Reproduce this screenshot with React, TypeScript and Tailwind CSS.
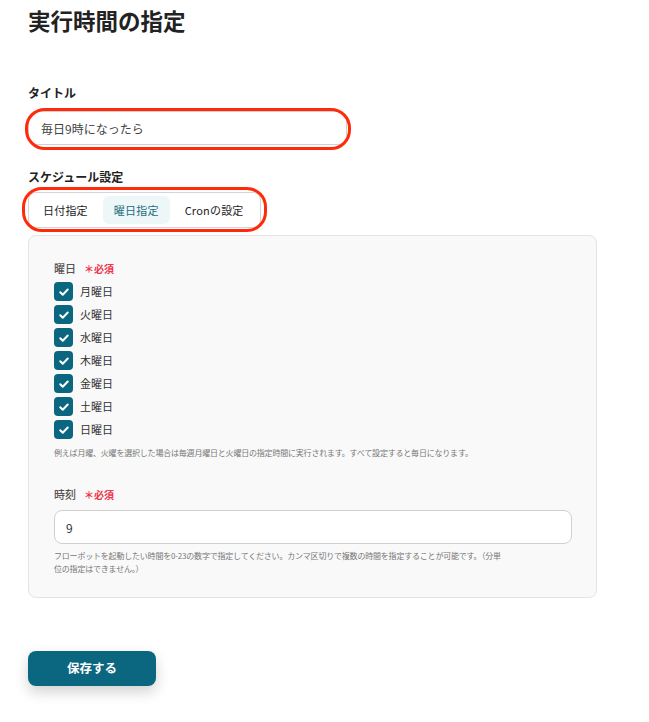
import React, { useState } from 'react';

// ── Fonts / colours ─────────────────────────────────────────────────────────
const FONT = '"Noto Sans CJK JP", "Noto Sans", "Liberation Sans", sans-serif';
const DAYS = ['月曜日', '火曜日', '水曜日', '木曜日', '金曜日', '土曜日', '日曜日'];
const TABS = ['日付指定', '曜日指定', 'Cronの設定'];

// ── Required badge ──────────────────────────────────────────────────────────
const Required = () => (
  <span className="ml-2 text-[10px] font-bold text-[#f0344e]">＊必須</span>
);

// ── Teal checkbox ───────────────────────────────────────────────────────────
const Check = ({ checked, onClick }: { checked: boolean; onClick: () => void }) => (
  <button
    onClick={onClick}
    className={`w-[19px] h-[19px] rounded-[4px] flex items-center justify-center shrink-0 ${
      checked ? 'bg-[#0b6680]' : 'bg-white border border-gray-300'
    }`}
  >
    {checked && (
      <svg width="12" height="12" viewBox="0 0 24 24" fill="none" stroke="white" strokeWidth="4" strokeLinecap="round" strokeLinejoin="round">
        <path d="M4.5 12.5l5 5L19.5 7" />
      </svg>
    )}
  </button>
);

// ── Red annotation ring (drawn over the field) ──────────────────────────────
const Ring = ({ className }: { className: string }) => (
  <div className={`pointer-events-none absolute border-[3px] border-[#ff2a0a] ${className}`} />
);

export default function App() {
  const [tab, setTab] = useState(1);
  const [days, setDays] = useState<boolean[]>(DAYS.map(() => true));

  return (
    <div className="min-h-screen bg-white pl-[28px] text-[#333]" style={{ fontFamily: FONT }}>
      <h1 className="text-[22.5px] leading-[40px] font-bold text-[#222]">実行時間の指定</h1>

      {/* ── Title ─────────────────────────────────────────────────── */}
      <div className="mt-[45px] text-[12px] leading-[16px] font-bold text-[#222]">タイトル</div>
      <div className="relative mt-[10px] w-[319px]">
        <input
          defaultValue="毎日9時になったら"
          className="w-full h-[34px] rounded-lg border border-[#d0d0d0] bg-white px-[12px] text-[12px] text-[#444] outline-none"
        />
        <Ring className="-left-[3px] -right-[4px] -top-[3px] -bottom-[5px] rounded-[20px]" />
      </div>

      {/* ── Schedule tabs ─────────────────────────────────────────── */}
      <div className="mt-[24px] text-[12px] leading-[16px] font-bold text-[#222]">スケジュール設定</div>
      <div className="relative mt-[7px] w-fit">
        <div className="flex gap-1 p-[3px] pr-[5px] rounded-lg border border-[#d4d4d4] bg-white">
          {TABS.map((t, i) => (
            <button
              key={t}
              onClick={() => setTab(i)}
              className={`h-[28px] px-[11px] rounded-md text-[11px] tracking-[0.2px] ${
                tab === i ? 'bg-[#eef7f8] text-[#1d6b7e]' : 'text-[#222]'
              }`}
            >
              {t}
            </button>
          ))}
        </div>
        <Ring className="-left-[6px] -right-[6px] -top-[5px] -bottom-[4px] rounded-[20px]" />
      </div>

      {/* ── Panel ─────────────────────────────────────────────────── */}
      <div className="mt-[7px] w-[569px] rounded-lg border border-[#e4e4e4] bg-[#f9f9f9] pl-[25px] pr-[24px] pt-[24px] pb-[22px]">
        <div className="text-[11px] leading-[16px] font-medium text-[#555]">
          曜日<Required />
        </div>
        <div className="mt-[5px] flex flex-col gap-[4px]">
          {DAYS.map((d, i) => (
            <label key={d} className="flex items-center gap-[7px] text-[11px] text-[#333]">
              <Check
                checked={days[i]}
                onClick={() => setDays(days.map((v, j) => (j === i ? !v : v)))}
              />
              {d}
            </label>
          ))}
        </div>
        <p className="mt-[7px] text-[8px] leading-[14px] tracking-[-0.2px] text-[#777]">
          例えば月曜、火曜を選択した場合は毎週月曜日と火曜日の指定時間に実行されます。すべて設定すると毎日になります。
        </p>

        <div className="mt-[26px] text-[11px] leading-[16px] font-medium text-[#555]">
          時刻<Required />
        </div>
        <input
          defaultValue="9"
          className="mt-[7px] w-full h-[34px] rounded-lg border border-[#d0d0d0] bg-white px-[11px] text-[12px] text-[#333] outline-none"
        />
        <p className="mt-[5px] max-w-[451px] text-[8px] leading-[13px] tracking-[-0.2px] text-[#777]">
          フローボットを起動したい時間を0-23の数字で指定してください。カンマ区切りで複数の時間を指定することが可能です。（分単位の指定はできません。）
        </p>
      </div>

      {/* ── Save ──────────────────────────────────────────────────── */}
      <button className="mt-[53px] w-[128px] h-[35px] rounded-lg bg-[#0b6680] text-white text-[12.5px] font-bold shadow-[0_6px_14px_rgba(0,0,0,0.18)]">
        保存する
      </button>
    </div>
  );
}
